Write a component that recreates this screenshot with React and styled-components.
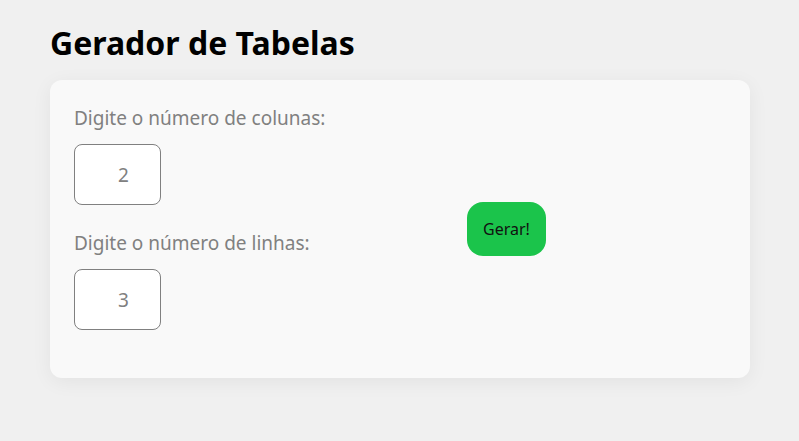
import React, { useState } from "react";
import styled, { createGlobalStyle } from "styled-components";

const GlobalStyle = createGlobalStyle`
  body {
    margin: 0;
    background-color: #f0f0f0;
    font-family: "Noto Sans", "Open Sans", sans-serif;
  }
`;

const Page = styled.div`
  padding: 21px 50px 40px 50px;
`;

const Title = styled.h1`
  margin: 0 0 15px 0;
  font-size: 32px;
  font-weight: 700;
  color: #000;
  line-height: 44px;
`;

const Card = styled.form`
  display: flex;
  align-items: center;
  width: 700px;
  box-sizing: border-box;
  padding: 24px;
  background-color: #f9f9f9;
  border-radius: 12px;
  box-shadow: 0 4px 20px rgba(0, 0, 0, 0.06);
`;

const Fields = styled.div`
  display: flex;
  flex-direction: column;
  width: 393px;
  padding-bottom: 24px;
`;

const Label = styled.label`
  font-size: 19px;
  color: #808080;
  line-height: 28px;
  margin-bottom: 12px;
`;

const Input = styled.input`
  width: 87px;
  height: 61px;
  box-sizing: border-box;
  padding: 0 0 0 12px;
  margin-bottom: 24px;
  border: 1px solid #808080;
  border-radius: 8px;
  background: #fff;
  font-family: inherit;
  font-size: 19px;
  color: #808080;
  text-align: center;
  &:last-child {
    margin-bottom: 0;
  }
  &::-webkit-inner-spin-button {
    -webkit-appearance: none;
    margin: 0;
  }
`;

const Button = styled.button`
  width: 79px;
  height: 54px;
  border: none;
  border-radius: 16px;
  background-color: #1bc44b;
  color: #111;
  font-family: inherit;
  font-size: 16px;
  cursor: pointer;
`;

export default function App() {
  const [cols, setCols] = useState(2);
  const [rows, setRows] = useState(3);
  return (
    <Page>
      <GlobalStyle />
      <Title>Gerador de Tabelas</Title>
      <Card onSubmit={e => e.preventDefault()}>
        <Fields>
          <Label>Digite o número de colunas:</Label>
          <Input type="number" value={cols} onChange={e => setCols(e.target.value)} />
          <Label>Digite o número de linhas:</Label>
          <Input type="number" value={rows} onChange={e => setRows(e.target.value)} />
        </Fields>
        <Button type="submit">Gerar!</Button>
      </Card>
    </Page>
  );
}
